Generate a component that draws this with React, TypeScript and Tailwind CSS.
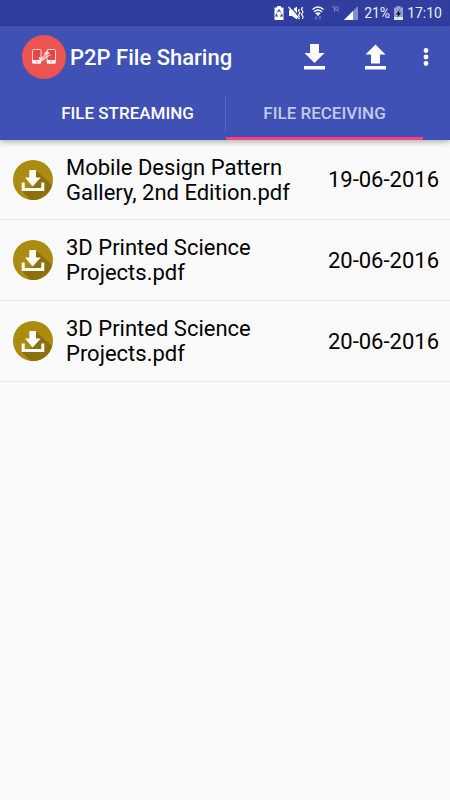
import React from "react";

type SharedFile = {
  id: number;
  name: string;
  date: string;
};

const files: SharedFile[] = [
  { id: 1, name: "Mobile Design Pattern Gallery, 2nd Edition.pdf", date: "19-06-2016" },
  { id: 2, name: "3D Printed Science Projects.pdf", date: "20-06-2016" },
  { id: 3, name: "3D Printed Science Projects.pdf", date: "20-06-2016" },
];

const StatusBar: React.FC = () => (
  <div className="flex h-[26px] items-center justify-end bg-[#303f9f] pr-2 text-[14px] text-[#eceef8]">
    {/* battery saver */}
    <svg className="mr-1 h-[14px] w-[10px]" viewBox="0 0 10 14" fill="none">
      <path d="M3 0h4v1.5h2.5V14H.5V1.5H3z" fill="#fff" />
      <path d="M3.4 6.2 5 4l1.6 2.2M7.4 7.6l.9 2.4H6M4.2 10H1.8l.9-2.4" stroke="#303f9f" strokeWidth="1.1" />
    </svg>
    {/* vibrate, muted */}
    <svg className="mr-2 h-[14px] w-4" viewBox="0 0 16 14" fill="none">
      <path d="M1 4h3l5-3.500v13L4 10H1z" fill="#fff" />
      <path d="m2 0 11 13" stroke="#303f9f" strokeWidth="1.200" />
      <path d="m.5 1 11 12" stroke="#fff" strokeWidth="1.200" />
      <path d="m11.500 3-1 2 1.500 2-1.500 2 1 2M14.500 1l-1 2.500L15 6l-1.500 2.500 1.500 2-.5 2.500" stroke="#fff" strokeWidth="1.200" />
    </svg>
    {/* wifi */}
    <svg className="mr-2 h-[14px] w-3" viewBox="0 0 12 14" fill="none">
      <path d="M.5 3.500Q6-1.500 11.500 3.500M2 5.800q4-3.600 8 0M3.800 7.900q2.200-1.900 4.400 0" stroke="#fff" strokeWidth="1.400" />
      <path d="m4.500 8.500 1.500-.5 1.500.5L6 10z" fill="#fff" />
      <path d="M4 10v3M2.800 12 4 13.300 5.200 12M8 13.500v-3M6.800 11.500 8 10.200l1.200 1.300" stroke="#7882c0" />
    </svg>
    {/* no roaming */}
    <svg className="mr-1 h-[14px] w-2" viewBox="0 0 8 14" fill="none">
      <path d="m0 0 7 6M2.500 6V1H5q1.500 0 1.500 1.200T5 3.500H2.500M5 3.500 7 6" stroke="#7780bf" />
    </svg>
    {/* signal */}
    <svg className="mr-1.5 h-[14px] w-[14px]" viewBox="0 0 14 14">
      <path d="M0 14 14 0v14z" fill="#858ec7" />
      <path d="M0 14 9 5v9z" fill="#fff" />
    </svg>
    <span>21%</span>
    {/* battery, charging */}
    <svg className="mx-1 h-[14px] w-[9px]" viewBox="0 0 9 14">
      <path d="M2.500 0h4v1.500H9V14H0V1.500h2.500z" fill="#989fd0" />
      <path d="M0 11h9v3H0z" fill="#e4e6f4" />
      <path d="M5.800 3 2 8.500h2.200L3.200 12 7 6.800H4.800z" fill="#10131f" />
    </svg>
    <span>17:10</span>
  </div>
);

const Logo: React.FC = () => (
  <svg className="size-11 shrink-0" viewBox="0 0 44 44" fill="none" aria-hidden="true">
    <circle cx="22" cy="22" r="22" fill="#ef5350" />
    <rect x="10.500" y="14.500" width="8.500" height="13.500" rx="1" fill="#ea4541" stroke="#fbdcdc" />
    <rect x="25" y="14.500" width="8.500" height="13.500" rx="1" fill="#ea4541" stroke="#fbdcdc" />
    <path d="M10.500 25H19v3.500h-8.500zM25 25h8.500v3.500H25z" fill="#fff" />
    <path d="M14 26.800h1.500M28.500 26.800H30" stroke="#ef5350" />
    <path d="m17 23.500 3.500-.5 2.500-3 4-2.500M18 26l4-1.500 2.500-3 4-1.500" stroke="#fbdcdc" strokeWidth="1.300" />
    <path d="m21.500 19 4-3.500 2 3.500zM22.500 23.500 18 26l-1.500-4z" fill="#fbdcdc" />
  </svg>
);

const FileIcon: React.FC = () => (
  <svg className="size-10 shrink-0" viewBox="0 0 40 40" aria-hidden="true">
    <circle cx="20" cy="20" r="20" fill="#ab8c10" />
    <path d="m23 10.500 16 14.500A20 20 0 0 1 20 40q-1.500 0-3-.3L9 31l11-5z" fill="#8b7010" />
    <path
      d="M16.300 10h6.700v7.500h4.700L19.700 26.500 12 17.500h4.300zM8.700 22.500h3V28h16.600v-5.500h3V31H8.700z"
      fill="#fff"
    />
  </svg>
);

const Header: React.FC = () => (
  <header className="relative bg-[#3f51b5] text-white shadow-[0_2px_6px_rgba(0,0,0,0.3)]">
    <div className="flex h-[62px] items-center pl-[22px]">
      <Logo />
      <h1 className="ml-1 flex-1 text-[22px] font-medium whitespace-nowrap">P2P File Sharing</h1>
      <button type="button" aria-label="Download" className="mr-10">
        <svg className="h-[26px] w-[21px]" viewBox="0 0 21 26" fill="currentColor">
          <path d="M6 0h9v9h5.500l-10 10-10-10H6zM0 22h21v3.500H0z" />
        </svg>
      </button>
      <button type="button" aria-label="Upload" className="mr-[35px]">
        <svg className="h-[26px] w-[21px]" viewBox="0 0 21 26" fill="currentColor">
          <path d="M6 19.500h9v-9h5.500l-10-10-10 10H6zM0 22h21v3.500H0z" />
        </svg>
      </button>
      <button type="button" aria-label="More options" className="mr-[19px]">
        <svg className="h-5 w-[10px]" viewBox="0 0 10 20" fill="currentColor">
          <circle cx="5" cy="3.500" r="2.400" />
          <circle cx="5" cy="10" r="2.400" />
          <circle cx="5" cy="16.500" r="2.400" />
        </svg>
      </button>
    </div>
    <div role="tablist" className="flex h-[52px] pr-[27px] pl-[29px] text-[17px] font-medium">
      <button type="button" role="tab" aria-selected="false" className="flex-1">
        FILE STREAMING
      </button>
      <span className="my-2 -ml-px w-px bg-[#5c6bc0]" />
      <button
        type="button"
        role="tab"
        aria-selected="true"
        className="flex-1 border-b-3 border-[#ff4081] pt-[3px] text-[#c3c9ea]"
      >
        FILE RECEIVING
      </button>
    </div>
  </header>
);

const FileRow: React.FC<{ file: SharedFile }> = ({ file }) => (
  <li className="flex h-[81px] items-center border-b border-[#e6e6e6] pr-[11px] pl-[13px] text-[22px] leading-[25px] first:h-20">
    <FileIcon />
    <span className="mr-5 ml-[13px] flex-1">{file.name}</span>
    <time>{file.date}</time>
  </li>
);

const App: React.FC = () => (
  <div className="min-h-screen bg-[#fafafa] font-['Roboto',sans-serif] text-black">
    <StatusBar />
    <Header />
    <main>
      <ul>
        {files.map((file) => (
          <FileRow key={file.id} file={file} />
        ))}
      </ul>
    </main>
  </div>
);

export default App;
